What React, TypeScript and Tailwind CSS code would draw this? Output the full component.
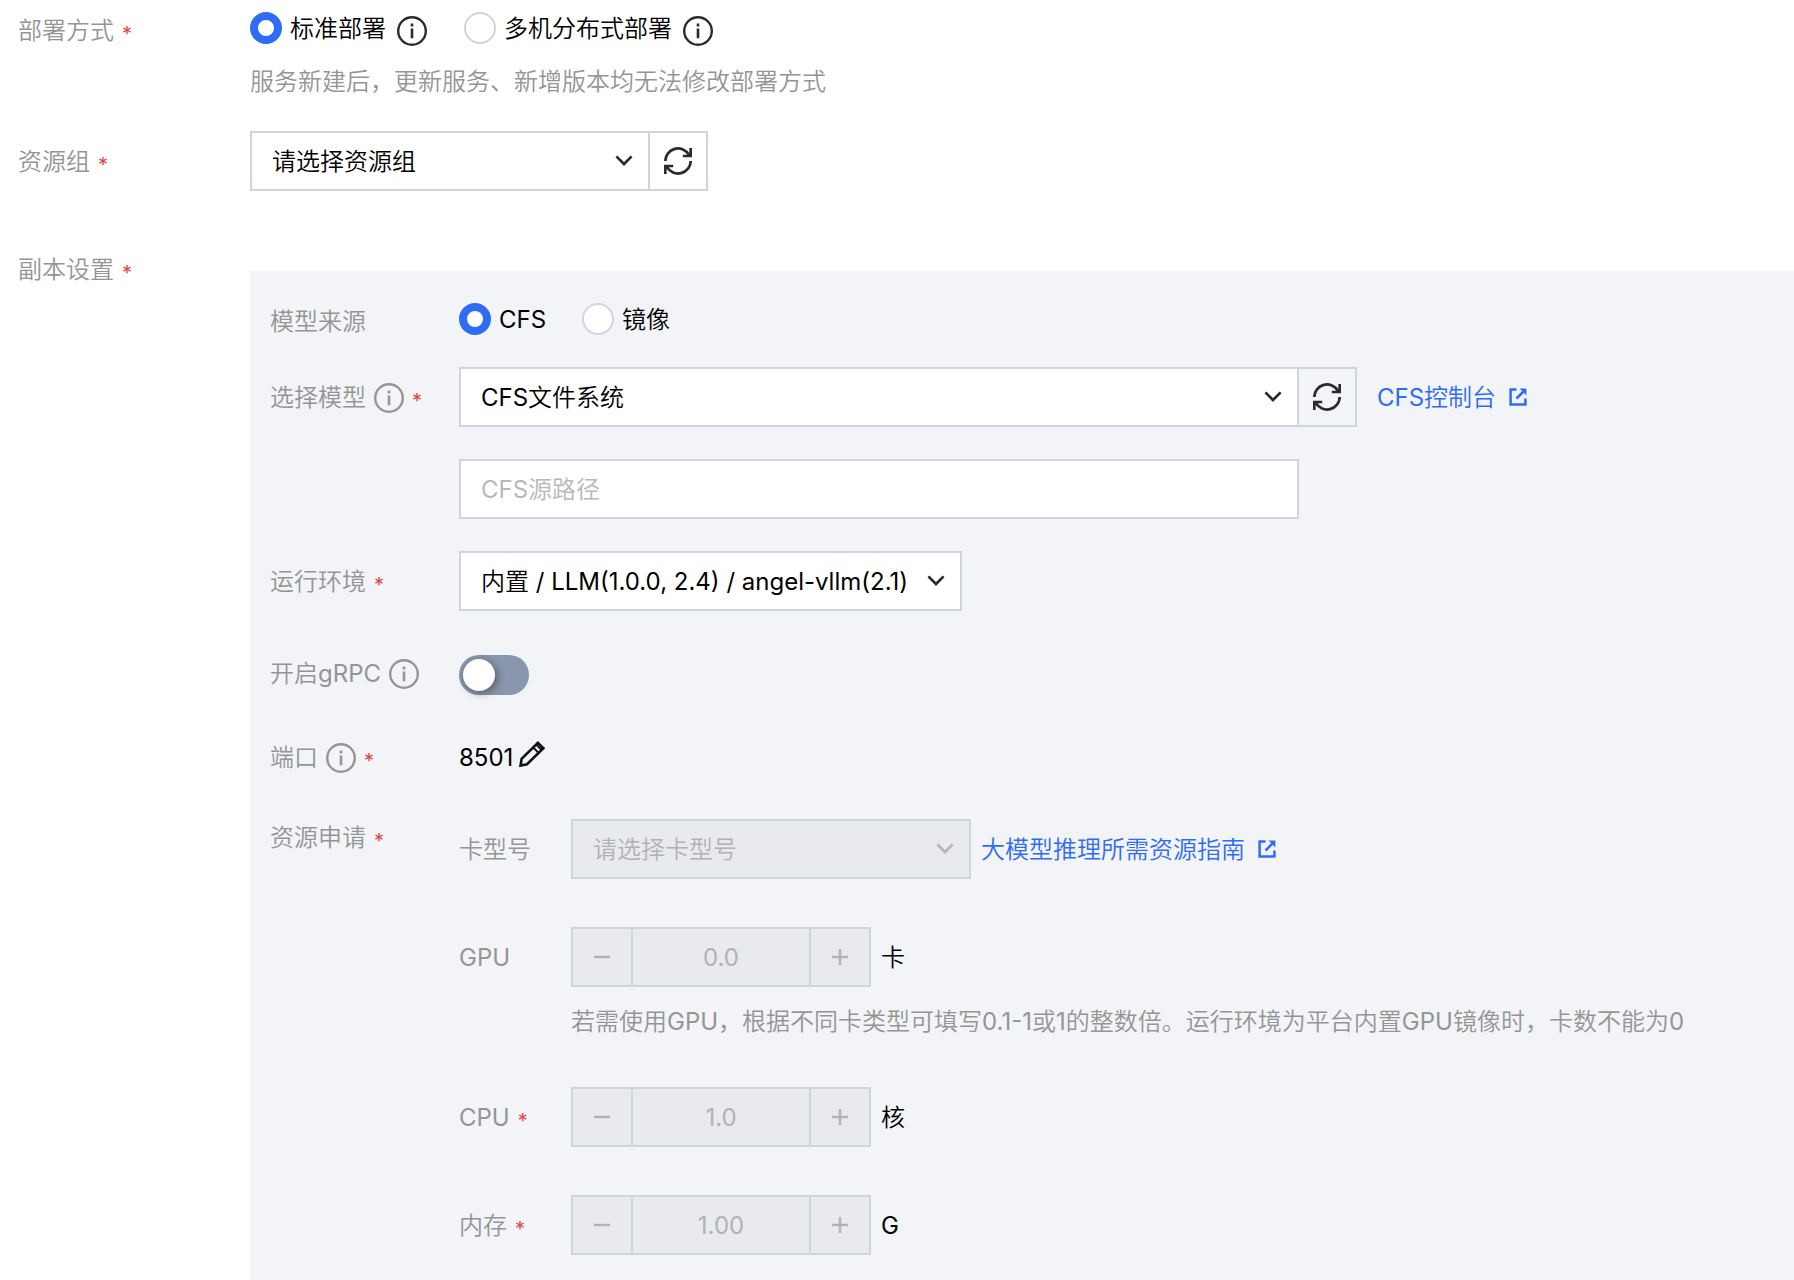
import { useState, type ReactNode } from "react";

const BORDER = "border-2 border-[#cfd5de]";

function InfoIcon() {
  return (
    <svg viewBox="0 0 30 30" className="size-[30px] shrink-0" fill="none" stroke="currentColor">
      <circle cx="15" cy="15" r="13.8" strokeWidth="2.4" />
      <path d="M15 7.6v2.8M15 12.4v9.8" strokeWidth="2.6" />
    </svg>
  );
}

function RefreshIcon() {
  return (
    <svg viewBox="0 0 28 28" className="size-7" fill="none" stroke="currentColor" strokeWidth="2.7">
      <path d="M1.3 14A12.7 12.7 0 0 1 25 7.8" />
      <path d="M26.7 1v8h-7.9" />
      <path d="M26.7 14A12.7 12.7 0 0 1 3 20.2" />
      <path d="M1.3 27v-8h7.9" />
      <path d="M22 9l4.8-4.5V9zM6 19l-4.8 4.5V19z" fill="currentColor" stroke="none" />
    </svg>
  );
}

function ChevronIcon() {
  return (
    <svg viewBox="0 0 18 12" className="h-3 w-[18px]" fill="none" stroke="currentColor" strokeWidth="2.7">
      <path d="M1.4 1.4L9 9l7.6-7.6" />
    </svg>
  );
}

function ExternalIcon() {
  return (
    <svg viewBox="0 0 18 18" className="size-[18px]" fill="none" stroke="currentColor" strokeWidth="2.5">
      <path d="M7.5 1.6H1.6v14.8h14.8V10.5" />
      <path d="M7.5 10.5L16 2" />
      <path d="M10.5 0.6H17.4V7.5z" fill="currentColor" stroke="none" />
    </svg>
  );
}

function PencilIcon() {
  return (
    <svg viewBox="0 0 26 26" className="size-[26px]" fill="none" stroke="currentColor" strokeWidth="2.6">
      <path d="M1.6 24.5l1-6.7L18.9 1.9l5.5 5.3L8 23.2z" />
      <path d="M14 6.3l5.8 5.8M17.3 3.6l5.6 5.6" strokeWidth="2" />
      <path d="M0.6 25.6l0.8-4.4 3.6 3.6z" fill="currentColor" stroke="none" />
    </svg>
  );
}

function Star() {
  return <span className="mt-1.5 text-xl leading-none text-[#e54545]">*</span>;
}

type LabelProps = {
  text: string;
  htmlFor?: string;
  info?: boolean;
  required?: boolean;
  className?: string;
};

function Label({ text, htmlFor, info, required, className = "" }: LabelProps) {
  return (
    <div className={`flex shrink-0 items-center gap-2 pt-0.5 text-[#959595] ${className}`}>
      <label htmlFor={htmlFor}>{text}</label>
      {info && <InfoIcon />}
      {required && <Star />}
    </div>
  );
}

type RadioProps = {
  name: string;
  text: string;
  checked: boolean;
  onChange: () => void;
};

function Radio({ name, text, checked, onChange }: RadioProps) {
  return (
    <label className="flex items-center gap-2 text-black">
      <input
        type="radio"
        name={name}
        checked={checked}
        onChange={onChange}
        className="size-8 appearance-none rounded-full border-2 border-[#cfd5de] bg-white checked:border-8 checked:border-[#2e6cf6]"
      />
      <span className="pt-0.5">{text}</span>
    </label>
  );
}

type SelectProps = {
  id: string;
  value: string;
  disabled?: boolean;
  className?: string;
};

function Select({ id, value, disabled, className = "" }: SelectProps) {
  return (
    <div className={`relative ${className}`}>
      <select
        id={id}
        disabled={disabled}
        className={`h-[60px] w-full appearance-none ${BORDER} bg-white pt-0.5 pr-8 pl-5 text-black opacity-100 disabled:bg-[#e8eaee] disabled:text-[#b0b2b5]`}
      >
        <option>{value}</option>
      </select>
      <span
        className={`pointer-events-none absolute inset-y-0 right-[17px] flex items-center ${disabled ? "text-[#b3b5b8]" : "text-[#2b2b2b]"}`}
      >
        <ChevronIcon />
      </span>
    </div>
  );
}

function RefreshButton() {
  return (
    <button
      type="button"
      aria-label="刷新"
      className={`-ml-0.5 flex h-[60px] w-[60px] shrink-0 items-center justify-center ${BORDER} text-[#2b2b2b]`}
    >
      <RefreshIcon />
    </button>
  );
}

function ExternalLink({ children }: { children: ReactNode }) {
  return (
    <a href="#" className="flex items-center gap-[13px] text-[#2e6cf6]">
      <span className="pt-0.5">{children}</span>
      <ExternalIcon />
    </a>
  );
}

function Stepper({ id, value, unit }: { id: string; value: string; unit: string }) {
  return (
    <div className="flex items-center gap-2.5">
      <div className={`flex h-[60px] w-[300px] ${BORDER} bg-[#e8eaee] text-[#b0b2b5]`}>
        <button type="button" disabled aria-label="减少" className="flex w-[58px] items-center justify-center">
          <svg viewBox="0 0 16 16" className="size-4" stroke="currentColor" strokeWidth="2.4">
            <path d="M0 8h16" />
          </svg>
        </button>
        <input
          id={id}
          disabled
          defaultValue={value}
          className="min-w-0 flex-1 border-x-2 border-[#cfd5de] pt-0.5 text-center"
        />
        <button type="button" disabled aria-label="增加" className="flex w-[58px] items-center justify-center">
          <svg viewBox="0 0 16 16" className="size-4" stroke="currentColor" strokeWidth="2.4">
            <path d="M0 8h16M8 0v16" />
          </svg>
        </button>
      </div>
      <span className="pt-0.5 text-black">{unit}</span>
    </div>
  );
}

export default function App() {
  const [deploy, setDeploy] = useState("standard");
  const [source, setSource] = useState("cfs");
  const [grpc, setGrpc] = useState(false);

  return (
    <form className="flex min-h-screen flex-col bg-white pt-3 font-['Inter','Noto_Sans_CJK_SC_DemiLight','Noto_Sans_CJK_SC',sans-serif] text-2xl leading-9">
      <div className="flex pl-[18px]">
        <Label text="部署方式" required className="h-9 w-[232px]" />
        <div>
          <div className="flex h-8 items-center">
            <Radio
              name="deploy"
              text="标准部署"
              checked={deploy === "standard"}
              onChange={() => setDeploy("standard")}
            />
            <span className="mt-1.5 mr-[37px] ml-[11px] text-[#2b2b2b]">
              <InfoIcon />
            </span>
            <Radio
              name="deploy"
              text="多机分布式部署"
              checked={deploy === "multi"}
              onChange={() => setDeploy("multi")}
            />
            <span className="mt-1.5 ml-[11px] text-[#2b2b2b]">
              <InfoIcon />
            </span>
          </div>
          <p className="mt-5 text-[#959595]">服务新建后，更新服务、新增版本均无法修改部署方式</p>
        </div>
      </div>

      <div className="mt-[31px] flex pl-[18px]">
        <Label text="资源组" htmlFor="group" required className="h-[60px] w-[232px]" />
        <Select id="group" value="请选择资源组" className="w-[400px]" />
        <RefreshButton />
      </div>

      <div className="mt-[60px] flex flex-1 pl-[18px]">
        <Label text="副本设置" required className="h-9 w-[232px]" />
        <div className="mt-5 flex-1 bg-[#f2f4f8] pt-8 pb-6 pl-5">
          <div className="flex">
            <Label text="模型来源" className="h-9 w-[189px]" />
            <div className="flex h-8 items-center gap-9">
              <Radio name="source" text="CFS" checked={source === "cfs"} onChange={() => setSource("cfs")} />
              <Radio name="source" text="镜像" checked={source === "image"} onChange={() => setSource("image")} />
            </div>
          </div>

          <div className="mt-7 flex items-center">
            <Label text="选择模型" htmlFor="model" info required className="w-[189px]" />
            <Select id="model" value="CFS文件系统" className="w-[840px]" />
            <RefreshButton />
            <div className="ml-5">
              <ExternalLink>CFS控制台</ExternalLink>
            </div>
          </div>

          <input
            aria-label="CFS源路径"
            placeholder="CFS源路径"
            className={`mt-8 ml-[189px] block h-[60px] w-[840px] ${BORDER} bg-white px-5 text-black placeholder:text-[#b8b8b8]`}
          />

          <div className="mt-8 flex items-center">
            <Label text="运行环境" htmlFor="runtime" required className="w-[189px]" />
            <Select id="runtime" value="内置 / LLM(1.0.0, 2.4) / angel-vllm(2.1)" className="w-[503px]" />
          </div>

          <div className="mt-11 flex h-10">
            <Label text="开启gRPC" htmlFor="grpc" info className="h-9 w-[189px]" />
            <input
              id="grpc"
              type="checkbox"
              role="switch"
              checked={grpc}
              onChange={(e) => setGrpc(e.target.checked)}
              className="h-10 w-[70px] appearance-none rounded-full bg-[#8996ad] p-1 before:block before:size-8 before:rounded-full before:bg-white before:shadow-[2px_2px_8px_rgba(0,0,0,0.4)] checked:bg-[#2e6cf6] checked:before:ml-[30px]"
            />
          </div>

          <div className="mt-11 flex h-9 items-center">
            <Label text="端口" info required className="w-[189px]" />
            <span className="pt-0.5 text-black">8501</span>
            <button type="button" aria-label="编辑端口" className="mb-1.5 ml-1.5 text-[#111]">
              <PencilIcon />
            </button>
          </div>

          <div className="mt-11 flex">
            <Label text="资源申请" required className="h-9 w-[189px]" />
            <div>
              <div className="flex items-center">
                <Label text="卡型号" htmlFor="card" className="w-28" />
                <Select id="card" value="请选择卡型号" disabled className="w-[400px]" />
                <div className="ml-2.5">
                  <ExternalLink>大模型推理所需资源指南</ExternalLink>
                </div>
              </div>

              <div className="mt-12 flex items-center">
                <Label text="GPU" htmlFor="gpu" className="w-28" />
                <Stepper id="gpu" value="0.0" unit="卡" />
              </div>
              <p className="mt-[17px] mb-[47px] ml-28 text-[#959595]">
                若需使用GPU，根据不同卡类型可填写0.1-1或1的整数倍。运行环境为平台内置GPU镜像时，卡数不能为0
              </p>

              <div className="flex items-center">
                <Label text="CPU" htmlFor="cpu" required className="w-28" />
                <Stepper id="cpu" value="1.0" unit="核" />
              </div>

              <div className="mt-12 flex items-center">
                <Label text="内存" htmlFor="memory" required className="w-28" />
                <Stepper id="memory" value="1.00" unit="G" />
              </div>
            </div>
          </div>
        </div>
      </div>
    </form>
  );
}
